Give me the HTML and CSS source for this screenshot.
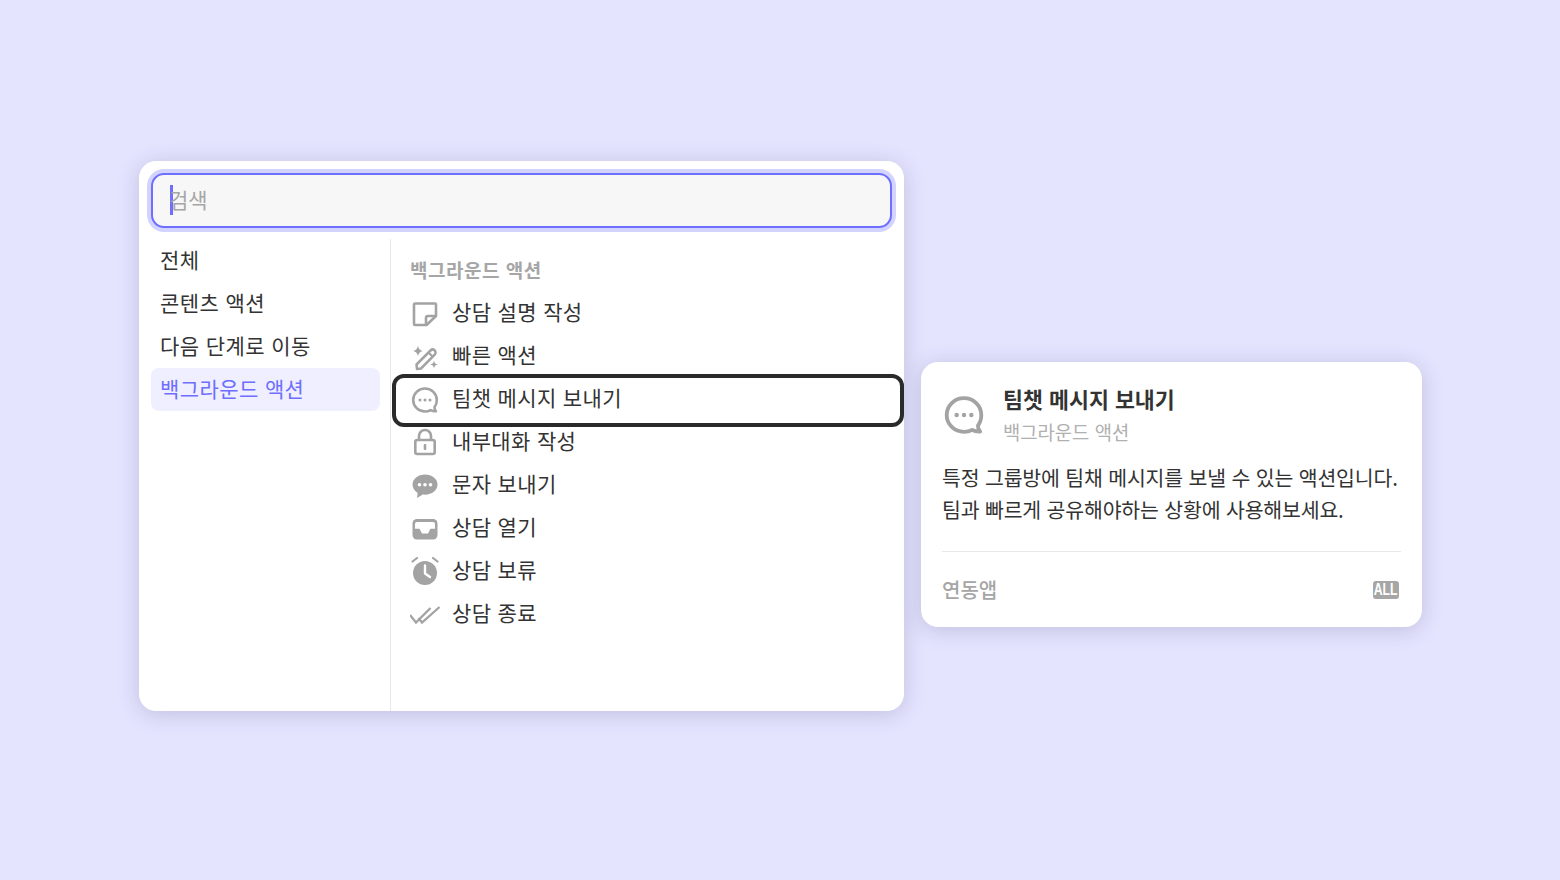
FILE: index.html
```html
<!DOCTYPE html>
<html lang="ko">
<head>
<meta charset="UTF-8">
<title>백그라운드 액션</title>
<link rel="stylesheet" href="styles.css">
</head>
<body>
  <div class="palette">
    <div class="search"><span class="caret"></span><span class="placeholder">검색</span></div>
    <div class="paletteBody">
      <ul class="sidebar">
        <li>전체</li>
        <li>콘텐츠 액션</li>
        <li>다음 단계로 이동</li>
        <li class="active">백그라운드 액션</li>
      </ul>
      <div class="actions">
        <div class="groupTitle">백그라운드 액션</div>
        <ul>
          <li>
            <svg class="icon" viewBox="0 0 30 30"><path d="M5 4.500h20a1 1 0 0 1 1 1V17L16.500 26H5a1 1 0 0 1-1-1V5.500a1 1 0 0 1 1-1Z" fill="none" stroke="#a3a3a3" stroke-width="2.600" stroke-linejoin="round"/><path d="M25 17h-7a2 2 0 0 0-2 2v6.500" fill="none" stroke="#a3a3a3" stroke-width="2.600"/></svg>
            <span>상담 설명 작성</span>
          </li>
          <li>
            <svg class="icon" viewBox="0 0 30 30"><path d="M8 3.500c.7 3.600 1.700 4.700 5 5.500-3.300.8-4.300 1.900-5 5.500-.7-3.600-1.700-4.700-5-5.500 3.300-.8 4.300-1.900 5-5.500ZM24 18.500c.4 2.500 1.100 3.200 4 4-2.900.8-3.600 1.500-4 4-.4-2.500-1.100-3.200-4-4 2.900-.8 3.600-1.500 4-4Z" fill="#a3a3a3"/><path d="M7 27l-.5-4.500L20.500 8.500c1.200-1.200 3-1.200 4.200 0s1.200 3 0 4.200L11 26.500Z" fill="none" stroke="#a3a3a3" stroke-width="2.500" stroke-linejoin="round"/><path d="M18.500 10.500l4.500 4.500" stroke="#a3a3a3" stroke-width="2.200"/></svg>
            <span>빠른 액션</span>
          </li>
          <li class="selected">
            <svg class="icon" viewBox="0 0 30 30"><path d="M15 3.500C8.500 3.500 3.200 8.600 3.200 15S8.500 26.500 15 26.500c2 0 4-.5 5.600-1.400 1.400.9 3.400 1.300 5.400 1.200-1-1-1.500-2.400-1.500-4 1.500-2 2.300-4.400 2.300-7.300 0-6.400-5.300-11.500-11.800-11.500Z" fill="none" stroke="#a3a3a3" stroke-width="2.600" stroke-linejoin="round"/><circle cx="10" cy="15" r="1.500" fill="#a3a3a3"/><circle cx="15" cy="15" r="1.500" fill="#a3a3a3"/><circle cx="20" cy="15" r="1.500" fill="#a3a3a3"/></svg>
            <span>팀챗 메시지 보내기</span>
          </li>
          <li>
            <svg class="icon" viewBox="0 0 30 30"><path d="M9 12V8a6 6 0 0 1 12 0v4" fill="none" stroke="#a3a3a3" stroke-width="2.600"/><rect x="5.300" y="12" width="19.400" height="14" rx="2" fill="none" stroke="#a3a3a3" stroke-width="2.600"/><rect x="13.700" y="16" width="2.600" height="6" rx="1" fill="#a3a3a3"/></svg>
            <span>내부대화 작성</span>
          </li>
          <li>
            <svg class="icon" viewBox="0 0 30 30"><path d="M15 3.500C8 3.500 2.500 7.900 2.500 13.600c0 3.500 2 6.500 5.200 8.300L7 27l5.800-3.400c.7.100 1.500.1 2.200.1 7 0 12.500-4.400 12.500-10.100S22 3.500 15 3.500Z" fill="#a3a3a3"/><circle cx="9.500" cy="13.700" r="1.800" fill="#fff"/><circle cx="15" cy="13.700" r="1.800" fill="#fff"/><circle cx="20.500" cy="13.700" r="1.800" fill="#fff"/></svg>
            <span>문자 보내기</span>
          </li>
          <li>
            <svg class="icon" viewBox="0 0 30 30"><rect x="2.500" y="5" width="25" height="20.500" rx="4.500" fill="#a3a3a3"/><path d="M7 8h16a2 2 0 0 1 2 2v4.700h-4.500L18 19.500h-6l-2.500-4.800H5V10a2 2 0 0 1 2-2Z" fill="#fff"/></svg>
            <span>상담 열기</span>
          </li>
          <li>
            <svg class="icon" viewBox="0 0 30 30"><circle cx="15" cy="16" r="12" fill="#a3a3a3"/><path d="M15 8.500V16.500l5 3.500" fill="none" stroke="#fff" stroke-width="2.400" stroke-linecap="round" stroke-linejoin="round"/><path d="M2.500 4.500L7 1M27.500 4.500L23 1" stroke="#a3a3a3" stroke-width="2.200" stroke-linecap="round"/></svg>
            <span>상담 보류</span>
          </li>
          <li>
            <svg class="icon" viewBox="0 0 30 30"><path d="M0 15l6 7.500L20.500 8M8.500 18l3.500 4.500L29.500 7" fill="none" stroke="#a3a3a3" stroke-width="2.300"/></svg>
            <span>상담 종료</span>
          </li>
        </ul>
      </div>
    </div>
  </div>

  <div class="detail">
    <div class="detailHead">
      <svg class="detailIcon" viewBox="0 0 30 30"><path d="M15 3.500C8.500 3.500 3.200 8.600 3.200 15S8.500 26.500 15 26.500c2 0 4-.5 5.600-1.400 1.400.9 3.400 1.300 5.400 1.200-1-1-1.500-2.400-1.500-4 1.500-2 2.300-4.400 2.300-7.300 0-6.400-5.300-11.500-11.800-11.500Z" fill="none" stroke="#a3a3a3" stroke-width="2.600" stroke-linejoin="round"/><circle cx="10" cy="15" r="1.500" fill="#a3a3a3"/><circle cx="15" cy="15" r="1.500" fill="#a3a3a3"/><circle cx="20" cy="15" r="1.500" fill="#a3a3a3"/></svg>
      <div>
        <div class="detailTitle">팀챗 메시지 보내기</div>
        <div class="detailSub">백그라운드 액션</div>
      </div>
    </div>
    <p class="detailText">특정 그룹방에 팀채 메시지를 보낼 수 있는 액션입니다.<br>팀과 빠르게 공유해야하는 상황에 사용해보세요.</p>
    <div class="detailFoot">
      <span>연동앱</span>
      <span class="allBadge"><span class="allText">ALL</span></span>
    </div>
  </div>
</body>
</html>
```

FILE: styles.css
```css
* {
    box-sizing: border-box;
}
body {
    font-family: "Noto Sans CJK KR", "Noto Sans", sans-serif;
    background-color: #e4e4ff;
    display: flex;
    align-items: flex-start;
    gap: 17px;
    height: 880px;
    margin: 0;
    padding: 161px 0 0 139px;
    overflow: hidden;
    color: #333;
}
ul {
    list-style: none;
    margin: 0;
    padding: 0;
}
.palette {
    width: 765px;
    height: 550px;
    padding: 12px 0 0 12px;
    background-color: #fff;
    border-radius: 17px;
    box-shadow: 0 3px 22px rgba(50, 50, 100, 0.2);
}
.search {
    display: flex;
    align-items: center;
    width: 741px;
    height: 55px;
    padding-left: 17px;
    padding-bottom: 1px;
    background-color: #f7f7f7;
    border: 2px solid #6e6eff;
    border-radius: 13px;
    box-shadow: 0 0 0 4px #d3d3ff;
}
.caret {
    width: 3px;
    height: 30px;
    background-color: #6e6eff;
}
.placeholder {
    padding-bottom: 3px;
    margin-left: -4px;
    font-size: 21px;
    color: #a6a6a6;
}
.paletteBody {
    display: flex;
    height: 472px;
    margin-top: 11px;
}
.sidebar {
    width: 240px;
    padding-right: 10px;
    border-right: 1px solid #e8e8e8;
}
.sidebar li {
    height: 43px;
    line-height: 41px;
    padding-left: 9px;
    font-size: 21px;
    letter-spacing: 0.4px;
    border-radius: 8px;
}
.sidebar .active {
    background-color: #efefff;
    color: #6e6eff;
}
.actions {
    flex: 1;
    padding-left: 19px;
}
.groupTitle {
    height: 53px;
    padding-top: 13px;
    line-height: 36px;
    font-size: 19px;
    font-weight: 700;
    letter-spacing: 0.5px;
    color: #a6a6a6;
}
.actions li {
    position: relative;
    display: flex;
    align-items: center;
    gap: 12px;
    height: 43px;
    font-size: 21px;
    letter-spacing: 0.35px;
}
.actions li span {
    padding-bottom: 5px;
}
.icon {
    width: 30px;
    height: 30px;
    flex-shrink: 0;
}
.selected::after {
    content: "";
    position: absolute;
    top: -4px;
    left: -18px;
    right: 0;
    bottom: -6px;
    border: 4px solid #2a2a2a;
    border-radius: 12px;
}
.detail {
    width: 501px;
    height: 265px;
    margin-top: 201px;
    padding: 20px 21px 0;
    background-color: #fff;
    border-radius: 17px;
    box-shadow: 0 3px 22px rgba(50, 50, 100, 0.2);
}
.detailHead {
    display: flex;
    align-items: center;
    gap: 17px;
}
.detailIcon {
    width: 44px;
    height: 44px;
    flex-shrink: 0;
}
.detailTitle {
    line-height: 33px;
    font-size: 21.700px;
    font-weight: 700;
}
.detailSub {
    line-height: 33px;
    font-size: 18.800px;
    color: #b0b0b0;
}
.detailText {
    margin: 13px 0 0;
    padding-bottom: 26px;
    border-bottom: 1px solid #e8e8e8;
    line-height: 32px;
    font-size: 20.500px;
    letter-spacing: -0.17px;
    white-space: nowrap;
}
.detailFoot {
    display: flex;
    justify-content: space-between;
    align-items: center;
    padding-top: 23px;
    font-size: 20px;
    font-weight: 500;
    color: #a6a6a6;
}
.allBadge {
    display: flex;
    justify-content: center;
    align-items: center;
    width: 26px;
    height: 18px;
    margin-right: 2px;
    background-color: #a6a6a6;
    border-radius: 3px;
    overflow: hidden;
}
.allText {
    font-family: "Liberation Sans", sans-serif;
    font-size: 17px;
    line-height: 18px;
    font-weight: 700;
    color: #fff;
    transform: scaleX(0.72);
}
```
